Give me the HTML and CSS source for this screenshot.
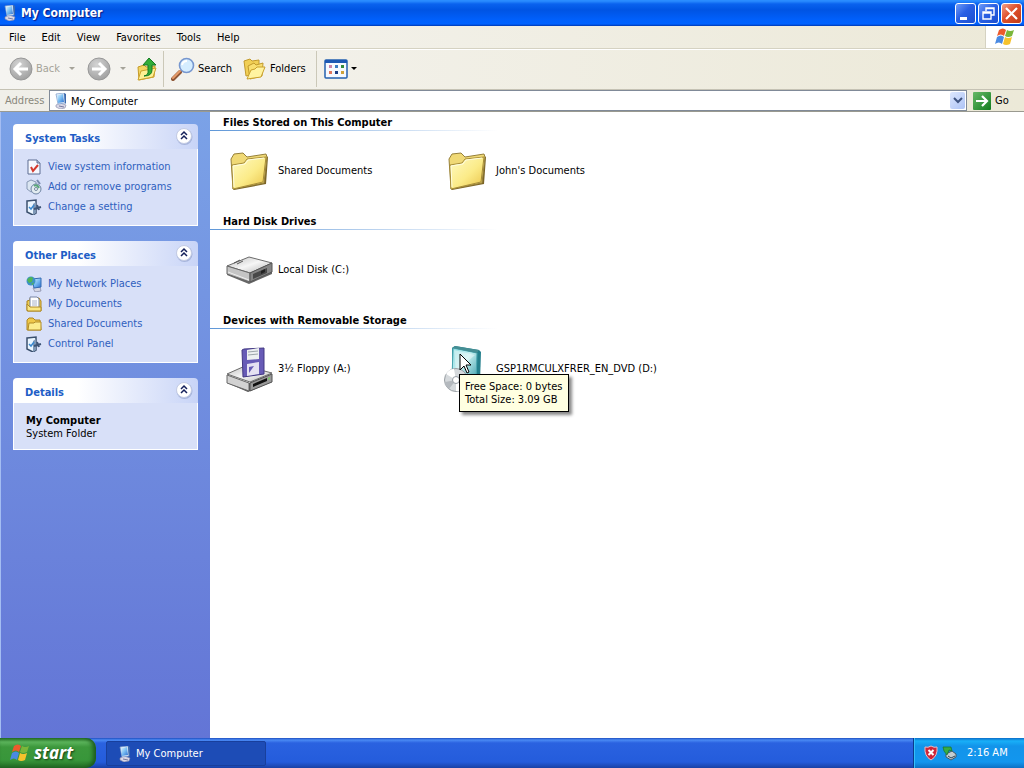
FILE: index.html
```html
<!DOCTYPE html>
<html lang="en">
<head>
<meta charset="utf-8">
<title>My Computer</title>
<link rel="stylesheet" href="styles.css">
</head>
<body>
<svg class="defs" aria-hidden="true">
  <defs>
    <linearGradient id="gFolder" x1="0" y1="0" x2="1" y2="1"><stop offset="0" stop-color="#fffbc4"/><stop offset=".55" stop-color="#fbeb88"/><stop offset="1" stop-color="#eac348"/></linearGradient>
    <linearGradient id="gScreen" x1="0" y1="0" x2="1" y2="1"><stop offset="0" stop-color="#e2f6ff"/><stop offset=".5" stop-color="#79bdf2"/><stop offset="1" stop-color="#2c6ed0"/></linearGradient>
    <linearGradient id="gMetal" x1="0" y1="0" x2="1" y2="1"><stop offset="0" stop-color="#bdbdbd"/><stop offset=".5" stop-color="#f6f6f6"/><stop offset="1" stop-color="#b4b4b4"/></linearGradient>
    <radialGradient id="gRound" cx=".4" cy=".3" r=".7"><stop offset="0" stop-color="#d4d4d4"/><stop offset="1" stop-color="#a2a2a2"/></radialGradient>
    <linearGradient id="gBox" x1="0" y1="0" x2="1" y2="1"><stop offset="0" stop-color="#8edbe0"/><stop offset=".45" stop-color="#c4eff0"/><stop offset="1" stop-color="#3096a4"/></linearGradient>
    <linearGradient id="gGo" x1="0" y1="0" x2="1" y2="1"><stop offset="0" stop-color="#67b967"/><stop offset="1" stop-color="#127c1e"/></linearGradient>
    <symbol id="computer" viewBox="0 0 16 16">
      <path d="M3 12l4-2 6 2-1 3-5 1-4-2z" fill="#d9d7e6" stroke="#8486a6" stroke-width=".6"/>
      <path d="M3 1l8-1 1 10-7 1z" fill="#eef4fb" stroke="#7698c8" stroke-width=".7"/>
      <path d="M4 2l6-1 1 8-6 1z" fill="url(#gScreen)"/>
      <path d="M11 0l2 1v9l-1 1z" fill="#3b69ad"/><path d="M6 13l5 1" stroke="#777aa0"/>
    </symbol>
    <symbol id="flag" viewBox="0 0 20 18">
      <path d="M4 2q4-3 7 0L9 8Q6 5 2 8z" fill="#ec5a2c"/>
      <path d="M12 2q3 2 7 0l-2 6q-4 2-7 0z" fill="#7ab63a"/>
      <path d="M2 9q4-3 7 0l-2 7q-3-3-7 0z" fill="#4a8ae2"/>
      <path d="M10 9q3 2 7 0l-2 7q-4 2-7 0z" fill="#f6c22c"/>
    </symbol>
    <symbol id="round-left" viewBox="0 0 24 24">
      <circle cx="12" cy="12" r="11" fill="url(#gRound)" stroke="#989898"/>
      <path d="M19 12H7M12 6l-6 6 6 6" fill="none" stroke="#fff" stroke-width="3"/>
    </symbol>
    <symbol id="round-right" viewBox="0 0 24 24">
      <circle cx="12" cy="12" r="11" fill="url(#gRound)" stroke="#989898"/>
      <path d="M5 12h12M12 6l6 6-6 6" fill="none" stroke="#fff" stroke-width="3"/>
    </symbol>
    <symbol id="up" viewBox="0 0 24 24">
      <path d="M3 10l6-2 2 2 9-1-1 11-15 3z" fill="#f3d661" stroke="#c69b28"/>
      <path d="M3 23l3-9 15-3-3 9z" fill="#fdf093" stroke="#cda32d"/>
      <path d="M9 19q5-1 4-6V8H8l6-7 7 7h-4v5q0 6-8 6z" fill="#32ad38" stroke="#147a22"/>
    </symbol>
    <symbol id="search" viewBox="0 0 24 24">
      <path d="M9 15l-7 7" stroke="#8e5535" stroke-width="4" stroke-linecap="round"/>
      <path d="M9 14l-7 7" stroke="#e69b6a" stroke-width="2" stroke-linecap="round"/>
      <circle cx="15.500" cy="8.500" r="7" fill="#d5edff" stroke="#7797cf" stroke-width="1.600"/>
      <path d="M11 8q1-4 5-4" fill="none" stroke="#fff" stroke-width="2"/>
    </symbol>
    <symbol id="folders" viewBox="0 0 24 24">
      <path d="M1 4l6-2 2 2 7-1v13L3 19z" fill="#f1cf55" stroke="#c29a2c"/>
      <path d="M5 9l6-3 2 2 7-2-1 13-12 3z" fill="#f9df70" stroke="#c29a2c"/>
      <path d="M4 22l4-9 4-1 2-2 8 0-4 10z" fill="#fff3a0" stroke="#c9a02c"/>
    </symbol>
    <symbol id="views" viewBox="0 0 24 20">
      <rect x="1" y="1" width="22" height="18" rx="1" fill="#f6f9ff" stroke="#2460b0" stroke-width="1.500"/>
      <path d="M1 1h22v3H1z" fill="#1c58b4"/>
      <path d="M5 6h3v3H5z" fill="#c982aa"/><path d="M11 6h3v3h-3z" fill="#3c7cc4"/><path d="M17 6h3v3h-3z" fill="#348a3c"/>
      <path d="M5 12h3v3H5z" fill="#e0765c"/><path d="M11 12h3v3h-3z" fill="#1d3d84"/><path d="M17 12h3v3h-3z" fill="#cfa23a"/>
    </symbol>
    <symbol id="caret" viewBox="0 0 6 4"><path d="M0 0h6L3 3z" fill="currentColor"/></symbol>
    <symbol id="down" viewBox="0 0 10 8"><path d="M1 1l4 4 4-4" fill="none" stroke="#3f5480" stroke-width="2"/></symbol>
    <symbol id="go" viewBox="0 0 18 18">
      <rect width="18" height="18" rx="1" fill="url(#gGo)"/>
      <path d="M3 9h10M9 4l5 5-5 5" fill="none" stroke="#fff" stroke-width="2.200"/>
    </symbol>
    <symbol id="chevrons" viewBox="0 0 18 18">
      <circle cx="9.500" cy="10" r="8" fill="#8c9cc8" opacity=".6"/>
      <circle cx="9" cy="9" r="7.500" fill="#fff" stroke="#c3cbe4"/>
      <path d="M6 8l3-3 3 3M6 12l3-3 3 3" fill="none" stroke="#14205a" stroke-width="1.500"/>
    </symbol>
    <symbol id="info" viewBox="0 0 16 16">
      <path d="M2 1h9l3 3v11H2z" fill="#f6f8ff" stroke="#5c6c92"/><path d="M11 1v3h3" fill="#b6c2de" stroke="#5c6c92"/>
      <path d="M5 8l2 4 5-6" fill="none" stroke="#d43a2e" stroke-width="2"/>
    </symbol>
    <symbol id="programs" viewBox="0 0 16 16">
      <path d="M1 3l4-2 5 2v8l-5 2-4-3z" fill="#dbe6f2" stroke="#8798b4"/>
      <circle cx="10" cy="10" r="5" fill="#e2ecf0" stroke="#6e84a4"/><path d="M8 7q3-2 5 2" fill="none" stroke="#5ba77a" stroke-width="2"/><circle cx="10" cy="10" r="1.500" fill="#fff" stroke="#71889e"/>
      <path d="M11 1l3 4" stroke="#7789ad" stroke-width="2"/>
    </symbol>
    <symbol id="setting" viewBox="0 0 16 16">
      <path d="M1 2l9-1v13l-3 2-6-3z" fill="#eaf5ff" stroke="#3b506e" stroke-width="1.500"/>
      <path d="M7 5l3-2v11l-3 2z" fill="#7f98b6"/>
      <path d="M3 8l2 2 3-4" fill="none" stroke="#3888cf" stroke-width="1.500"/>
      <path d="M8 10l7-2M11 6l2 5" stroke="#3e5576" stroke-width="2"/>
    </symbol>
    <symbol id="network" viewBox="0 0 16 16">
      <path d="M7 12l7-1 1 4-6 1z" fill="#d5d6e2" stroke="#7e84a2" stroke-width=".7"/>
      <path d="M6 3l9-1v9l-7 1z" fill="url(#gScreen)" stroke="#356bb2"/>
      <circle cx="5" cy="5" r="4.500" fill="#3d91c8"/><path d="M1 4q3-5 6-2l-1 4-3 1zM5 8l3-2-1 3z" fill="#50b556"/>
    </symbol>
    <symbol id="documents" viewBox="0 0 16 16">
      <path d="M1 5l3-1v-2h9l2 3v10H1z" fill="#efcd51" stroke="#ac8420"/>
      <path d="M4 1h7l2 2v9H4z" fill="#fff" stroke="#7784a4"/><path d="M6 5h5M6 7h5M6 9h5" stroke="#a8b2ca"/>
      <path d="M1 14V8l3 3h11v4H2z" fill="#fae783" stroke="#b08a24"/>
    </symbol>
    <symbol id="small-folder" viewBox="0 0 16 16">
      <path d="M1 14V4l2-2h4l2 2h5l1 10z" fill="#efc84a" stroke="#ac8422"/>
      <path d="M2 14l1-7h5l1-1h6v8z" fill="#fcec8c" stroke="#b28c28"/>
    </symbol>
    <symbol id="folder" viewBox="0 0 48 48">
      <path d="M9 43l32-6 2-27-2-1-3 26-30 7z" fill="#7b6426"/>
      <path d="M6 12l3-5 9-1 4 4 19-3 1 3-3 26-31 6z" fill="#f0d976" stroke="#96803a"/>
      <path d="M8 42L7 18l12-2 3-4 19-2-3 25-30 7z" fill="url(#gFolder)" stroke="#a68c38"/>
      <path d="M9 40L8 19l12-2 3-4 16-2" fill="none" stroke="#fffde0"/>
    </symbol>
    <symbol id="disk" viewBox="0 0 48 48">
      <path d="M2 21v8l22 9 23-10v-8L24 30z" fill="#666"/>
      <path d="M2 20l22-9 23 6-22 10z" fill="url(#gMetal)" stroke="#6b6b6b"/>
      <path d="M2 20l23 7v9L2 28z" fill="#c4c4c4" stroke="#666"/>
      <path d="M25 27l22-10v9L25 36z" fill="#858585" stroke="#555"/>
      <path d="M28 28l14-6v5l-14 6z" fill="#484848"/><path d="M3 26l21 8" stroke="#eee"/><path d="M9 17l6-3M12 18l6-3" stroke="#555"/><path d="M36 25l4-2v3l-4 2z" fill="#222"/>
    </symbol>
    <symbol id="floppy" viewBox="0 0 48 48">
      <path d="M2 31v7l21 9 24-10v-8L24 38z" fill="#555"/>
      <path d="M2 29l18-8 27 7-22 9z" fill="url(#gMetal)" stroke="#6b6b6b"/>
      <path d="M2 30l22 8v8L2 38z" fill="#d2d2d2" stroke="#686868"/>
      <path d="M25 38l22-9v8l-22 9z" fill="#999" stroke="#555"/>
      <path d="M28 39l14-6v3l-14 6z" fill="#111"/><path d="M43 33l2-1v2l-2 1z" fill="#7bc767"/>
      <path d="M17 5l2-1 20-1v26l-21 3z" fill="#675bb6" stroke="#423882"/>
      <path d="M22 5l12-2v11l-12 1z" fill="#edf0f1"/><path d="M23 7l10-1M23 10l10-1" stroke="#9ca4aa"/>
      <path d="M22 19l12-2v12l-12 2z" fill="#e5e1f2"/><path d="M24 22l5-1-5 7z" fill="#675bb6"/>
    </symbol>
    <symbol id="dvd" viewBox="0 0 48 48">
      <path d="M9 3l3-2 24 4 2 2-1 30-4 4-24-5z" fill="#237f8c"/>
      <path d="M10 3l24 5-1 31-24-5z" fill="url(#gBox)" stroke="#4aa6b0"/>
      <path d="M11 5l21 5-19 17z" fill="#fff" opacity=".4"/><path d="M9 3l3-2 24 4-2 3z" fill="#458e94"/>
      <circle cx="13" cy="35" r="11.500" fill="#d5d9dc" stroke="#999fa4"/>
      <path d="M13 35L3 29q3-5 8-5zM13 35l9 7q-4 5-9 4z" fill="#fff"/><path d="M13 35l-7 9q-4-3-4-7z" fill="#b4b9be"/>
      <circle cx="13" cy="35" r="3.500" fill="#fff" stroke="#969da4"/>
    </symbol>
    <symbol id="shield" viewBox="0 0 16 16">
      <path d="M8 1q3 2 6 1 1 9-6 13Q1 11 2 2q3 1 6-1z" fill="#cf2638" stroke="#efb9c1"/>
      <path d="M5.500 5l5 5M10.500 5l-5 5" stroke="#fff" stroke-width="2"/>
    </symbol>
    <symbol id="eject" viewBox="0 0 16 16">
      <path d="M4 9l6-3 4 3v3l-5 3-5-3z" fill="#c3cdd0" stroke="#445967"/><path d="M6 11l3 2 4-2" fill="none" stroke="#2c4452"/>
      <path d="M1 2l8 0 1 4-3-1-2 5-3-4z" fill="#38ad41" stroke="#197427" stroke-width=".7"/>
    </symbol>
  </defs>
</svg>
<div class="desktop">
  <header class="titlebar">
    <svg class="i16"><use href="#computer"/></svg>
    <h1 class="title">My Computer</h1>
    <div class="winbtns">
      <button class="winbtn" aria-label="Minimize"><svg viewBox="0 0 19 19"><path d="M4 13h7v3H4z" fill="#fff"/></svg></button>
      <button class="winbtn" aria-label="Restore"><svg viewBox="0 0 19 19"><path d="M7 7V4h8v7h-3M7 4.500h8M4 8h8v7H4zM4 9h8" fill="none" stroke="#fff" stroke-width="1.400"/></svg></button>
      <button class="winbtn close" aria-label="Close"><svg viewBox="0 0 19 19"><path d="M4 4l11 11M15 4L4 15" stroke="#fff" stroke-width="2.200"/></svg></button>
    </div>
  </header>
  <nav class="menubar">
    <button class="menu">File</button><button class="menu">Edit</button><button class="menu">View</button><button class="menu">Favorites</button><button class="menu">Tools</button><button class="menu">Help</button>
    <span class="brand"><svg class="flag"><use href="#flag"/></svg></span>
  </nav>
  <div class="toolbar">
    <button class="tool back" disabled><svg class="i24"><use href="#round-left"/></svg>Back<svg class="caret"><use href="#caret"/></svg></button>
    <button class="tool forward" disabled aria-label="Forward"><svg class="i24"><use href="#round-right"/></svg><svg class="caret"><use href="#caret"/></svg></button>
    <button class="tool upward" aria-label="Up"><svg class="i24"><use href="#up"/></svg></button>
    <button class="tool find"><svg class="i24"><use href="#search"/></svg>Search</button>
    <button class="tool tree"><svg class="i24"><use href="#folders"/></svg>Folders</button>
    <button class="tool view" aria-label="Views"><svg class="views"><use href="#views"/></svg><svg class="caret"><use href="#caret"/></svg></button>
  </div>
  <form class="address">
    <label for="addr">Address</label>
    <div class="field">
      <svg class="i16"><use href="#computer"/></svg>
      <input id="addr" type="text" value="My Computer">
      <button type="button" class="drop" aria-label="Show addresses"><svg><use href="#down"/></svg></button>
    </div>
    <button type="button" class="go"><svg><use href="#go"/></svg>Go</button>
  </form>
  <div class="content">
    <aside class="sidebar">
      <section class="panel">
        <div class="panel-head"><h2>System Tasks</h2><button class="fold" aria-label="Collapse System Tasks"><svg><use href="#chevrons"/></svg></button></div>
        <ul class="links">
          <li><a href="#"><svg class="i16"><use href="#info"/></svg>View system information</a></li>
          <li><a href="#"><svg class="i16"><use href="#programs"/></svg>Add or remove programs</a></li>
          <li><a href="#"><svg class="i16"><use href="#setting"/></svg>Change a setting</a></li>
        </ul>
      </section>
      <section class="panel">
        <div class="panel-head"><h2>Other Places</h2><button class="fold" aria-label="Collapse Other Places"><svg><use href="#chevrons"/></svg></button></div>
        <ul class="links">
          <li><a href="#"><svg class="i16"><use href="#network"/></svg>My Network Places</a></li>
          <li><a href="#"><svg class="i16"><use href="#documents"/></svg>My Documents</a></li>
          <li><a href="#"><svg class="i16"><use href="#small-folder"/></svg>Shared Documents</a></li>
          <li><a href="#"><svg class="i16"><use href="#setting"/></svg>Control Panel</a></li>
        </ul>
      </section>
      <section class="panel">
        <div class="panel-head"><h2>Details</h2><button class="fold" aria-label="Collapse Details"><svg><use href="#chevrons"/></svg></button></div>
        <div class="details"><strong>My Computer</strong><span>System Folder</span></div>
      </section>
    </aside>
    <main class="files">
      <section>
        <h2 class="group">Files Stored on This Computer</h2>
        <div class="items">
          <div class="item"><svg class="i48"><use href="#folder"/></svg><span>Shared Documents</span></div>
          <div class="item"><svg class="i48"><use href="#folder"/></svg><span>John's Documents</span></div>
        </div>
      </section>
      <section>
        <h2 class="group">Hard Disk Drives</h2>
        <div class="items">
          <div class="item"><svg class="i48"><use href="#disk"/></svg><span>Local Disk (C:)</span></div>
        </div>
      </section>
      <section>
        <h2 class="group">Devices with Removable Storage</h2>
        <div class="items">
          <div class="item"><svg class="i48"><use href="#floppy"/></svg><span>3½ Floppy (A:)</span></div>
          <div class="item"><svg class="i48"><use href="#dvd"/></svg><span>GSP1RMCULXFRER_EN_DVD (D:)</span>
            <div class="tooltip" role="tooltip">Free Space: 0 bytes<br>Total Size: 3.09 GB</div>
            <svg class="cursor" viewBox="0 0 13 21"><path d="M1 1v16l4-4 3 7 2-1-3-7h5z" fill="#fff" stroke="#000"/></svg>
          </div>
        </div>
      </section>
    </main>
  </div>
  <footer class="taskbar">
    <button class="start"><svg class="flag"><use href="#flag"/></svg>start</button>
    <button class="task"><svg class="i16"><use href="#computer"/></svg>My Computer</button>
    <div class="tray"><svg class="i16"><use href="#shield"/></svg><svg class="i16"><use href="#eject"/></svg><time>2:16 AM</time></div>
  </footer>
</div>
</body>
</html>
```
FILE: styles.css
```css
* { box-sizing: border-box; }
body {
  margin: 0;
  font: 11px/14px Tahoma, "DejaVu Sans Condensed", "Noto Sans", sans-serif;
  color: #000;
  background: #fff;
}
button, input { font: inherit; color: inherit; border: 0; background: none; padding: 0; margin: 0; }
h1, h2, ul { margin: 0; padding: 0; list-style: none; }
svg { display: block; flex: none; }
.defs { position: absolute; width: 0; height: 0; }
.i16 { width: 16px; height: 16px; }
.i24 { width: 24px; height: 24px; }
.i48 { width: 48px; height: 48px; }
.flag { width: 20px; height: 18px; }
.caret { width: 6px; height: 4px; }

.desktop { display: flex; flex-direction: column; min-height: 100vh; }

.titlebar {
  display: flex; align-items: center; height: 26px; padding: 0 2px;
  background: linear-gradient(#2a8cff 0, #2a8cff 1px, #0a62ee 4px, #0054e3 10px, #0060fc 20px, #0062ff 24px, #0038b0 26px);
}
.title { flex: 1; margin-left: 3px; font-size: 12px; line-height: 16px; color: #fff; text-shadow: 1px 1px 1px #0a1883; }
.winbtns { display: flex; gap: 2px; }
.winbtn {
  width: 21px; height: 21px; border: 1px solid #fff; border-radius: 3px;
  background: linear-gradient(135deg, #6f9cf8, #2a60e4 45%, #1c4fd0);
}
.winbtn svg { width: 19px; height: 19px; }
.winbtn.close { background: linear-gradient(135deg, #f0a088, #e0502c 45%, #c03c18); }

.menubar { display: flex; height: 23px; padding-left: 1px; background: linear-gradient(90deg, #f5f4f1, #ece9d8); border-bottom: 1px solid #d5d2c2; }
.menu { padding: 2px 8px 0; }
.brand { display: flex; align-items: center; justify-content: center; width: 39px; margin-left: auto; background: #fff; border-left: 1px solid #d5d2c2; }

.toolbar {
  display: flex; height: 41px; padding: 1px 0 2px 9px;
  background: linear-gradient(90deg, #f5f4f1, #ece9d8);
  border-top: 1px solid #fff; border-bottom: 1px solid #c5c2b4;
}
.tool { display: flex; align-items: center; gap: 3px; white-space: nowrap; }
.tool:disabled { color: #a5a399; }
.tool .caret { margin-left: auto; }
.back { width: 66px; margin-right: 12px; }
.forward { width: 39px; margin-right: 9px; }
.upward { width: 29px; border-right: 1px solid #cbc8b8; }
.find { width: 66px; margin: 0 6px 0 7px; }
.tree { width: 74px; border-right: 1px solid #cbc8b8; margin-right: 7px; }
.view { width: 32px; }
.views { width: 24px; height: 20px; }

.address { display: flex; align-items: center; height: 22px; background: linear-gradient(90deg, #f0efe9, #ece9d8); border-bottom: 1px solid #9a9a90; }
.address label { width: 49px; padding: 1px 0 0 5px; color: #8a887c; }
.field { display: flex; align-items: center; flex: 1; height: 21px; padding-left: 3px; background: #fff; border: 1px solid #808a98; }
.field input { flex: 1; min-width: 0; padding: 2px 0 0 2px; outline: 0; }
.drop { display: grid; place-items: center; width: 15px; height: 17px; margin-right: 1px; background: linear-gradient(135deg, #dde7fd, #adc3f5); border-radius: 2px; }
.drop svg { width: 10px; height: 8px; }
.go { display: flex; align-items: center; gap: 4px; width: 57px; padding-left: 6px; }
.go svg { width: 18px; height: 18px; }

.content { display: flex; flex: 1; }
.sidebar {
  display: flex; flex-direction: column; gap: 15px; width: 210px; padding: 12px 12px 12px 13px;
  background: linear-gradient(#7ba2e7, #6375d6);
  box-shadow: inset 1px 0 #a4bdf2;
}
.panel-head {
  display: flex; align-items: center; justify-content: space-between; height: 25px; padding: 0 5px 0 12px;
  background: linear-gradient(90deg, #fff 35%, #c8d4f7); border-radius: 4px 4px 0 0;
}
.panel-head h2 { font-size: 11px; line-height: 14px; padding-top: 4px; color: #215dc6; }
.fold { padding-bottom: 2px; }
.fold svg { width: 18px; height: 18px; }
.links, .details { border: 1px solid #fff; border-top: 0; background: #d8e0f8; }
.links { padding: 8px 0 8px 12px; }
.links a { display: flex; align-items: center; gap: 6px; height: 20px; color: #2f5fbe; text-decoration: none; white-space: nowrap; }
.details { display: flex; flex-direction: column; padding: 11px 12px 9px; line-height: 13px; }

.files { flex: 1; }
.group {
  height: 19px; padding: 3px 13px 0; font-size: 11px; line-height: 15px;
  background: linear-gradient(90deg, #5f97d8, #fff) 0 100% / 288px 1px no-repeat;
}
.items { display: flex; flex-wrap: wrap; padding-left: 15px; }
.item { position: relative; display: flex; align-items: center; gap: 5px; width: 218px; height: 80px; white-space: nowrap; }
.tooltip {
  position: absolute; left: 16px; top: 45px; padding: 5px 6px 5px 5px; line-height: 13px;
  background: #ffffe1; border: 1px solid #000; box-shadow: 3px 3px 3px #0007;
}
.cursor { position: absolute; left: 16px; top: 24px; width: 13px; height: 21px; }

.taskbar {
  display: flex; align-items: stretch; height: 30px; color: #fff;
  background: linear-gradient(#1f4fc0 0, #4a8af4 2px, #2a62e0 5px, #245cdc 24px, #1941a5 30px);
}
.start {
  display: flex; align-items: center; gap: 4px; width: 96px; padding-left: 10px;
  font: italic bold 17px/20px "Noto Sans", sans-serif; text-shadow: 1px 1px 2px #123c12;
  background: linear-gradient(#2a7a2a, #5cb45c 4px, #3c983c 9px, #38963a 22px, #226c24);
  border-radius: 0 10px 10px 0; box-shadow: inset -3px 0 4px #1c5a1e;
}
.task {
  display: flex; align-items: center; gap: 3px; width: 160px; margin: 3px 0 2px 10px; padding-left: 10px;
  background: #1d4cb6; border: 1px solid #183f9c; border-radius: 2px;
}
.tray {
  display: flex; align-items: center; gap: 3px; width: 111px; margin-left: auto; padding-left: 9px;
  background: linear-gradient(#0c6cc8, #18b0f8 3px, #1294ea 8px, #1296ee 24px, #0c70c4);
  border-left: 1px solid #0a3c8c; box-shadow: inset 1px 0 #35c0fa;
}
.tray time { margin-left: 6px; }
```
